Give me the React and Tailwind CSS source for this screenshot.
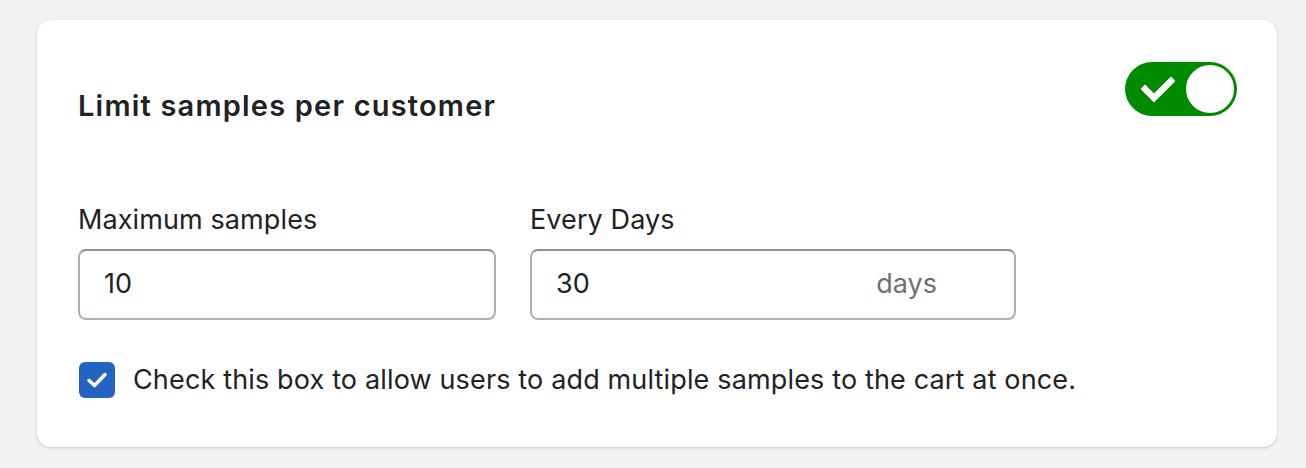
export default function App() {
  return (
    <div className="min-h-[468px] w-[1306px] bg-[#f1f2f4] pt-[20px] pl-[37px]" style={{ fontFamily: "Inter, 'Noto Sans', sans-serif" }}>
      <div className="w-[1240px] h-[427px] bg-white rounded-[14px] shadow-[0_1px_3px_rgba(0,0,0,0.18)] px-[41px] pt-[42px] text-[#202223]">
        <div className="flex items-start justify-between">
          <h2 className="text-[29px] font-semibold mt-[28px] leading-[32px] tracking-[1.2px]">Limit samples per customer</h2>
          <div className="w-[112px] h-[54px] rounded-full bg-[#008a00] flex items-center justify-between pl-[16px] pr-[1px] mr-[-1px]">
            <svg width="34" height="28" viewBox="0 0 34 28">
              <path d="M4 14 L13 23 L30 6" fill="none" stroke="white" strokeWidth="6.5" strokeLinecap="square" />
            </svg>
            <div className="w-[52px] h-[52px] rounded-full bg-white border-[2px] border-[#008a00]" />
          </div>
        </div>
        <div className="flex gap-[34px] mt-[82px]">
          <div className="flex flex-col">
            <label className="text-[27px] leading-[32px] mb-[13px] tracking-[0.1px]">Maximum samples</label>
            <div className="w-[418px] h-[71px] rounded-[8px] border-[2px] border-[#aab0b6] border-t-[#8c9196] flex items-center pl-[24px] text-[27px]">10</div>
          </div>
          <div className="flex flex-col">
            <label className="text-[27px] leading-[32px] mb-[13px] tracking-[0.1px]">Every Days</label>
            <div className="w-[486px] h-[71px] rounded-[8px] border-[2px] border-[#aab0b6] border-t-[#8c9196] flex items-center pl-[24px] pr-[77px] text-[27px] justify-between">
              <span>30</span>
              <span className="text-[#6d7175]">days</span>
            </div>
          </div>
        </div>
        <div className="flex items-center mt-[42px] gap-[18px]">
          <div className="w-[36px] h-[36px] rounded-[6px] bg-[#2463c2] flex items-center justify-center ml-[1px]">
            <svg width="24" height="24" viewBox="0 0 24 24">
              <path d="M4 12.5 L9.5 17.5 L20 6.5" fill="none" stroke="white" strokeWidth="3.5" strokeLinecap="round" strokeLinejoin="round" />
            </svg>
          </div>
          <span className="text-[27px] leading-[36px] tracking-[0.15px]">Check this box to allow users to add multiple samples to the cart at once.</span>
        </div>
      </div>
    </div>
  );
}
